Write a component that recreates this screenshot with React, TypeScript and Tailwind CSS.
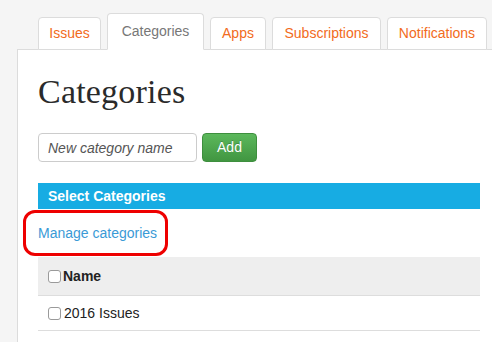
const tabs = [
  { label: 'Issues', w: 'w-[63px]' },
  { label: 'Categories', w: 'w-[97px]', active: true },
  { label: 'Apps', w: 'w-[56px]' },
  { label: 'Subscriptions', w: 'w-[109px]' },
  { label: 'Notifications', w: 'w-[100px]' },
]

function Checkbox() {
  return <span className="inline-block w-[13px] h-[13px] rounded-[3px] border border-[#9a9a9a] bg-white shrink-0" />
}

export default function App() {
  return (
    <div className="w-[492px] h-[342px] overflow-hidden bg-[#f5f5f5] pt-[13px] pl-[17px] font-['Liberation_Sans',Arial,sans-serif] text-[14px] text-[#222]">
      {/* tabs */}
      <div className="flex items-end gap-[6px] ml-[21px] relative z-10 -mb-px">
        {tabs.map(t => (
          <div key={t.label}
            className={`${t.w} flex items-center justify-center border border-[#dcdcdc] rounded-t-[4px] bg-white ${t.active ? 'h-[37px] border-b-white text-[#777]' : 'h-[33px] text-[#f26b21]'}`}>
            {t.label}
          </div>
        ))}
      </div>

      {/* panel */}
      <div className="w-[484px] h-[320px] bg-white border-l border-t border-[#dcdcdc] pl-[20px] pr-[21px]">
        <h1 className="mt-[24px] font-['Liberation_Serif',Georgia,serif] text-[34px] leading-[36px] text-[#2a2a2a] tracking-[0.2px]">Categories</h1>

        <div className="mt-[23px] flex gap-[5px]">
          <input placeholder="New category name"
            className="w-[159px] h-[29px] px-[9px] border border-[#cccccc] rounded-[4px] italic text-[14px] placeholder:text-[#555] focus:outline-none" />
          <button className="w-[55px] h-[29px] rounded-[4px] border border-[#3e8f3e] bg-gradient-to-b from-[#5cb85c] to-[#419641] text-white text-[14px] [text-shadow:0_-1px_0_rgba(0,0,0,0.2)]">
            Add
          </button>
        </div>

        <div className="mt-[21px] h-[26px] bg-[#17ace3] flex items-center pl-[10px] text-white font-bold text-[14px]">
          Select Categories
        </div>

        <div className="relative py-[14px] leading-5">
          <a href="#" className="text-[#3a9ad6]">Manage categories</a>
          <span className="absolute left-[-15px] top-[1px] w-[145px] h-[46px] border-[3px] border-[#ee0000] rounded-[12px]" />
        </div>

        <div className="h-[39px] bg-[#eeeeee] border-b border-[#dddddd] flex items-center gap-[2px] pl-[10px] font-bold">
          <Checkbox /> Name
        </div>
        <div className="h-[35px] border-b border-[#dddddd] flex items-center gap-[3px] pl-[10px]">
          <Checkbox /> 2016 Issues
        </div>
      </div>
    </div>
  )
}
